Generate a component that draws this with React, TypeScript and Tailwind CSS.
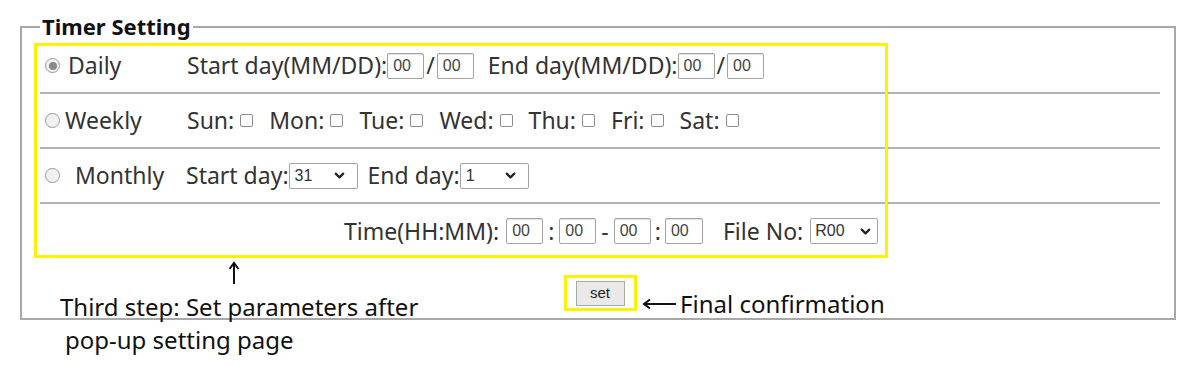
import { ChevronDown } from "lucide-react";

const font = { fontFamily: '"Noto Sans", "Open Sans", sans-serif' };

const Radio = ({ checked }: { checked?: boolean }) => (
  <span className="flex h-[15px] w-[15px] shrink-0 items-center justify-center rounded-full border border-[#9a9a9a] bg-[#f2f2f2]">
    {checked && <span className="h-[8px] w-[8px] rounded-full bg-[#8a8a8a]" />}
  </span>
);

const Box = ({ w = "w-[37px]" }: { w?: string }) => (
  <input
    readOnly
    value="00"
    className={`${w} h-[26px] rounded-[2px] border border-[#a3a3a3] bg-white pl-[5px] font-['Liberation_Sans',sans-serif] text-[16px] text-[#444] shadow-[inset_0_1px_1px_rgba(0,0,0,0.12)] outline-none`}
  />
);

const Check = () => (
  <span className="ml-[6px] mr-[16px] inline-block h-[13px] w-[13px] rounded-[2px] border border-[#8c8c8c] bg-white" />
);

const Select = ({ value }: { value: string }) => (
  <div className="flex h-[26px] w-[69px] items-center justify-between rounded-[2px] border border-[#a3a3a3] bg-white pl-[5px] pr-[10px] font-['Liberation_Sans',sans-serif] text-[16px] text-[#333]">
    <span>{value}</span>
    <ChevronDown size={15} strokeWidth={3.5} className="text-[#222]" />
  </div>
);

const FileSelect = () => (
  <div className="flex h-[26px] w-[68px] items-center justify-between rounded-[2px] border border-[#a3a3a3] bg-white pl-[4px] pr-[4px] font-['Liberation_Sans',sans-serif] text-[16px] text-[#333]">
    <span>R00</span>
    <ChevronDown size={15} strokeWidth={3.5} className="text-[#222]" />
  </div>
);

const days = ["Sun:", "Mon:", "Tue:", "Wed:", "Thu:", "Fri:", "Sat:"];

export default function App() {
  return (
    <div className="relative h-[366px] w-[1188px] overflow-hidden bg-white text-[#333]" style={font}>
      <fieldset className="ml-[20px] mt-[14px] w-[1156px] border-2 border-[#a8a8a8] pb-[7px] pl-[18px] pr-[14px]">
        <legend className="px-[2px] text-[22px] font-bold leading-[25px] text-[#111]">Timer Setting</legend>

        {/* rows */}
        <div className="flex h-[55px] items-center border-b-2 border-[#b3b3b3] text-[23px]">
          <div className="flex w-[147px] items-center gap-[8px] pl-[5px]">
            <Radio checked />
            <span>Daily</span>
          </div>
          <span>Start day(MM/DD):</span>
          <Box />
          <span className="mx-[2px]">/</span>
          <Box />
          <span className="ml-[14px]">End day(MM/DD):</span>
          <Box />
          <span className="mx-[2px]">/</span>
          <Box />
        </div>

        <div className="flex h-[55px] items-center border-b-2 border-[#b3b3b3] text-[23px]">
          <div className="flex w-[147px] items-center gap-[5px] pl-[5px]">
            <Radio />
            <span>Weekly</span>
          </div>
          {days.map((d) => (
            <div key={d} className="flex items-center">
              <span>{d}</span>
              <Check />
            </div>
          ))}
        </div>

        <div className="flex h-[55px] items-center border-b-2 border-[#b3b3b3] text-[23px]">
          <div className="flex w-[146px] items-center gap-[15px] pl-[5px]">
            <Radio />
            <span>Monthly</span>
          </div>
          <span>Start day:</span>
          <Select value="31" />
          <span className="ml-[10px]">End day:</span>
          <Select value="1" />
        </div>

        <div className="flex h-[54px] items-center pl-[304px] text-[23px]">
          <span className="mr-[7px]">Time(HH:MM):</span>
          <Box />
          <span className="mx-[5px]">:</span>
          <Box />
          <span className="mx-[5px]">-</span>
          <Box />
          <span className="mx-[4px]">:</span>
          <Box w="w-[38px]" />
          <span className="ml-[20px] mr-[7px]">File No:</span>
          <FileSelect />
        </div>

        {/* set button */}
        <div className="flex justify-center pt-[17px]">
          <div className="border-[3px] border-[#fff200] px-[9px] py-[2px]">
            <button className="h-[25px] w-[49px] border border-[#a9a9a9] bg-[#e9e9e9] font-['Liberation_Sans',sans-serif] text-[15px] text-[#222]">
              set
            </button>
          </div>
        </div>
      </fieldset>

      {/* yellow highlight */}
      <div className="pointer-events-none absolute left-[34px] top-[43px] h-[215px] w-[854px] border-[3px] border-[#fff200]" />

      {/* annotation: up arrow */}
      <svg className="absolute left-[227px] top-[261px]" width="14" height="24" viewBox="0 0 14 24">
        <path d="M7 23V3" stroke="#111" strokeWidth="2" />
        <path d="M2.5 8L7 2l4.5 6" fill="none" stroke="#111" strokeWidth="2" />
      </svg>

      <p className="absolute left-[60px] top-[290px] text-[24px] leading-[33px] text-[#111]">
        Third step: Set parameters after
        <br />
        <span className="pl-[5px]">pop-up setting page</span>
      </p>

      {/* annotation: final confirmation */}
      <div className="absolute left-[642px] top-[289px] flex items-center gap-[4px] text-[24px] leading-[30px] text-[#111]">
        <svg width="34" height="12" viewBox="0 0 34 12">
          <path d="M2 6h32" stroke="#111" strokeWidth="2" />
          <path d="M8 1.5L2 6l6 4.5" fill="none" stroke="#111" strokeWidth="2" />
        </svg>
        <span>Final confirmation</span>
      </div>
    </div>
  );
}
